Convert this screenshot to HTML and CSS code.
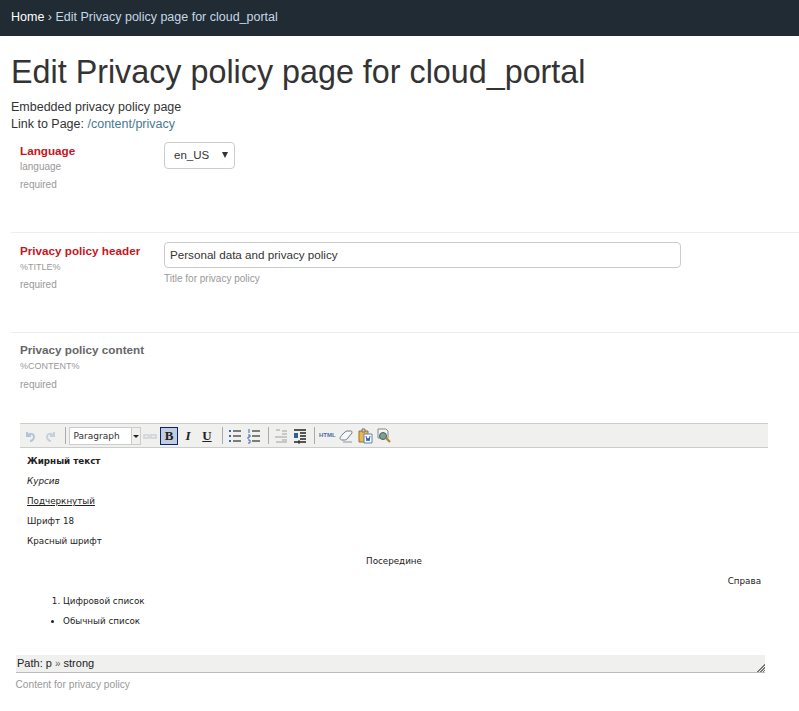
FILE: index.html
```html
<!DOCTYPE html>
<html lang="en">
<head>
<meta charset="UTF-8">
<title>Edit Privacy policy page</title>
<link rel="stylesheet" href="styles.css">
</head>
<body>

<div class="topbar">
  <a class="crumb-home" href="#">Home</a> <span class="crumb-sep">›</span> <span class="crumb-current">Edit Privacy policy page for cloud_portal</span>
</div>

<div class="container">
  <h1>Edit Privacy policy page for cloud_portal</h1>
  <div class="intro">
    Embedded privacy policy page<br>
    Link to Page: <a href="#">/content/privacy</a>
  </div>

  <div class="row row-first">
    <div class="label-col">
      <div class="label required">Language</div>
      <div class="meta">language</div>
      <div class="meta meta-req">required</div>
    </div>
    <div class="control-col">
      <div class="select-box"><span>en_US</span><span class="select-arrow"></span></div>
    </div>
  </div>

  <div class="row">
    <div class="label-col">
      <div class="label required">Privacy policy header</div>
      <div class="meta meta-var">%TITLE%</div>
      <div class="meta meta-req">required</div>
    </div>
    <div class="control-col">
      <input class="text-input" type="text" value="Personal data and privacy policy">
      <div class="help">Title for privacy policy</div>
    </div>
  </div>

  <div class="row row-last">
    <div class="label-col">
      <div class="label">Privacy policy content</div>
      <div class="meta meta-var">%CONTENT%</div>
      <div class="meta meta-req">required</div>
    </div>
  </div>
</div>

<div class="editor">
  <div class="toolbar">
    <svg class="tool" width="16" height="16" viewBox="0 0 16 16"><path d="M5 4v4h4M5 8c2-3 7-3 7 1 0 2-2 4-4 4" fill="none" stroke="#b4c4d8" stroke-width="2"/></svg>
    <svg class="tool tool-redo" width="16" height="16" viewBox="0 0 16 16"><path d="M11 4v4H7M11 8C9 5 4 5 4 9c0 2 2 4 4 4" fill="none" stroke="#c4d0dc" stroke-width="2"/></svg>
    <span class="tool-sep"></span>
    <div class="format-select"><span class="format-value">Paragraph</span><span class="format-btn"></span></div>
    <svg class="tool" width="16" height="16" viewBox="0 0 16 16"><path d="M2 7h5v3H2zM9 7h5v3H9z" fill="none" stroke="#ccd2d8" stroke-width="1.5"/></svg>
    <span class="tool-btn tool-active">B</span>
    <span class="tool-btn tool-italic">I</span>
    <span class="tool-btn tool-under">U</span>
    <span class="tool-sep"></span>
    <svg class="tool" width="16" height="16" viewBox="0 0 16 16"><path d="M6 3h8M6 8h8M6 13h8" stroke="#555" stroke-width="1.3"/><path d="M2 2h2v2H2zM2 7h2v2H2zM2 12h2v2H2z" fill="#3d66b0"/></svg>
    <svg class="tool" width="16" height="16" viewBox="0 0 16 16"><path d="M6 3h8M6 8h8M6 13h8" stroke="#555" stroke-width="1.3"/><path d="M3 1v4M2 7h2v2H2v2M2 12h2v3H2" fill="none" stroke="#3d66b0"/></svg>
    <span class="tool-sep"></span>
    <svg class="tool" width="16" height="16" viewBox="0 0 16 16"><path d="M9 3h5M9 6h5M2 9h12M9 12h5M3 2h4M3 14h11" stroke="#bbb" stroke-width="1.5"/></svg>
    <svg class="tool" width="16" height="16" viewBox="0 0 16 16"><path d="M2 2h12M8 5h6M8 8h6M8 11h6M2 14h12" stroke="#222" stroke-width="1.6"/><path d="M2 5h4v5H2z" fill="#2f5f9f"/><path d="M7 12v4" stroke="#222"/></svg>
    <span class="tool-sep"></span>
    <span class="tool-html">HTML</span>
    <svg class="tool" width="16" height="16" viewBox="0 0 16 16"><path d="M2 10c0-1 5-7 7-7h4c1 0 1 1 1 2l-5 6c-1 1-2 1-3 1H4c-1 0-2-1-2-2z" fill="#f6f8fa" stroke="#6c7a88"/><path d="M5 14h9" stroke="#8a96a2"/></svg>
    <svg class="tool" width="16" height="16" viewBox="0 0 16 16"><path d="M2 3h9v11H2z" fill="#e8b84e" stroke="#9a7420"/><path d="M5 1h3v3H5z" fill="#ccc" stroke="#777"/><path d="M7 6h8v9H7z" fill="#fff" stroke="#5a82b8"/><path d="M9 8l1 5 1-3 1 3 1-5" fill="none" stroke="#2f5fa8"/></svg>
    <svg class="tool" width="16" height="16" viewBox="0 0 16 16"><path d="M2 1h8l2 2v7H2z" fill="#f4f4f4" stroke="#888"/><circle cx="7" cy="8" r="3.5" fill="#6fa88a" stroke="#557"/><path d="M10 10l4 4" stroke="#b08a3a" stroke-width="2.4"/></svg>
  </div>

  <div class="edit-area">
    <p><strong>Жирный текст</strong></p>
    <p><em>Курсив</em></p>
    <p><u>Подчеркнутый</u></p>
    <p>Шрифт 18</p>
    <p>Красный шрифт</p>
    <p class="center">Посередине</p>
    <p class="right">Справа</p>
    <ol><li>Цифровой список</li></ol>
    <ul><li>Обычный список</li></ul>
  </div>

  <div class="pathbar">
    <span>Path: p <span class="path-sep">»</span> strong</span>
    <span class="grip"></span>
  </div>
  <div class="editor-help">Content for privacy policy</div>
</div>

</body>
</html>
```

FILE: styles.css
```css
body {
  margin: 0;
  font-family: "Liberation Sans", Arial, sans-serif;
  font-size: 12.5px;
  line-height: 1.25;
  color: #333;
  background-color: #fff;
  overflow: hidden;
}
a {
  color: #4a7a90;
  text-decoration: none;
}
.topbar {
  height: 36px;
  line-height: 35px;
  padding-left: 11px;
  background-color: #212b33;
  color: #c9d3da;
}
.crumb-home {
  color: #fff;
}
.crumb-current {
  color: #c4d8e6;
}
.container {
  margin-left: 11px;
}
h1 {
  margin: 0;
  padding-top: 16px;
  font-size: 32.3px;
  font-weight: 400;
  line-height: 40px;
  color: #333;
}
.intro {
  margin-top: 7px;
  line-height: 17px;
}
.row {
  display: flex;
  height: 99px;
  padding-left: 9px;
  border-bottom: 1px solid #eee;
}
.row-last {
  border-bottom: none;
  height: 90px;
}
.label-col {
  width: 144px;
  padding-top: 10px;
}
.row-last .label-col {
  padding-top: 9px;
}
.label {
  margin-bottom: 2px;
  font-weight: 700;
  font-size: 11.7px;
  line-height: 15px;
  color: #666;
}
.label.required {
  color: #c9141c;
}
.meta {
  font-size: 10px;
  line-height: 14px;
  color: #999;
}
.meta-var {
  font-size: 9px;
}
.meta-req {
  margin-top: 4px;
}
.row-last .meta-req {
  margin-top: 5px;
}
.control-col {
  width: 517px;
  padding-top: 9px;
}
.select-box {
  display: flex;
  align-items: center;
  justify-content: space-between;
  width: 71px;
  height: 27px;
  padding: 0 6px 0 9px;
  box-sizing: border-box;
  border: 1px solid #ccc;
  border-radius: 4px;
  font-size: 11.5px;
}
.select-arrow {
  border-left: 3.5px solid transparent;
  border-right: 3.5px solid transparent;
  border-top: 6px solid #333;
  margin-top: -2px;
}
.text-input {
  display: block;
  width: 100%;
  height: 26px;
  padding: 0 5px 2px;
  box-sizing: border-box;
  border: 1px solid #ccc;
  border-radius: 4px;
  font-family: inherit;
  font-size: 11.65px;
  color: #333;
}
.help {
  margin-top: 4px;
  font-size: 10px;
  line-height: 14px;
  color: #999;
}
.editor {
  margin-left: 16px;
  width: 749px;
}
.toolbar {
  display: flex;
  align-items: center;
  width: 748px;
  height: 25px;
  margin-left: 4px;
  padding-left: 0.5px;
  box-sizing: border-box;
  background-color: #f0f0ee;
  border-top: 1px solid #ccc;
  border-bottom: 1px solid #ccc;
}
.tool {
  flex: none;
  margin: 0 1.5px;
}
.tool-redo {
  margin-left: 3.5px;
}
.tool-sep {
  flex: none;
  width: 1px;
  height: 17px;
  margin: 0 3px 0 4px;
  background-color: #aaa;
}
.format-select {
  flex: none;
  display: flex;
  width: 72px;
  height: 18px;
  box-sizing: border-box;
  border: 1px solid #ccc;
  background-color: #fff;
  font-family: "DejaVu Sans", Verdana, sans-serif;
  font-size: 9px;
  line-height: 17px;
}
.format-value {
  flex: 1;
  padding-left: 4px;
}
.format-btn {
  position: relative;
  width: 8px;
  background-color: #f0f0ee;
  border-left: 1px solid #ccc;
}
.format-btn::after {
  content: "";
  position: absolute;
  top: 7px;
  left: 1px;
  border-left: 3px solid transparent;
  border-right: 3px solid transparent;
  border-top: 3px solid #222;
}
.tool-btn {
  flex: none;
  width: 18px;
  height: 18px;
  margin: 0 0.5px;
  box-sizing: border-box;
  text-align: center;
  font-family: "Liberation Serif", serif;
  font-size: 13px;
  font-weight: 700;
  line-height: 17px;
  color: #222;
}
.tool-active {
  background-color: #c2cbe0;
  border: 1px solid #0a246a;
  line-height: 16px;
}
.tool-italic {
  font-style: italic;
}
.tool-under {
  margin-right: 1.5px;
  text-decoration: underline;
}
.tool-html {
  flex: none;
  width: 16px;
  margin: 0 1.5px;
  text-align: center;
  font-size: 6px;
  font-weight: 700;
  color: #4a6ea8;
}
.edit-area {
  height: 207px;
  margin-left: 11px;
  padding-top: 7px;
  box-sizing: border-box;
  font-family: "DejaVu Sans", Verdana, sans-serif;
  font-size: 8.75px;
  line-height: 12px;
  color: #222;
}
.edit-area p {
  margin: 0 0 8px;
}
.edit-area ol,
.edit-area ul {
  margin: 0 0 8px;
  padding-left: 36px;
}
.center {
  text-align: center;
  padding-right: 4px;
}
.right {
  text-align: right;
  padding-right: 4px;
}
.pathbar {
  position: relative;
  height: 18px;
  padding-left: 1px;
  background-color: #f0f0ee;
  border-bottom: 1px solid #bbb;
  box-sizing: border-box;
  font-size: 11px;
  line-height: 17px;
  color: #222;
}
.path-sep {
  color: #666;
  font-size: 10px;
}
.grip {
  position: absolute;
  right: 0;
  bottom: 0;
  width: 9px;
  height: 9px;
  background: repeating-linear-gradient(135deg, transparent 0 1px, #777 1px 2px);
  clip-path: polygon(100% 0, 100% 100%, 0 100%);
}
.editor-help {
  margin-top: 5px;
  margin-left: -0.5px;
  font-size: 10.2px;
  line-height: 13px;
  color: #999;
}
```
